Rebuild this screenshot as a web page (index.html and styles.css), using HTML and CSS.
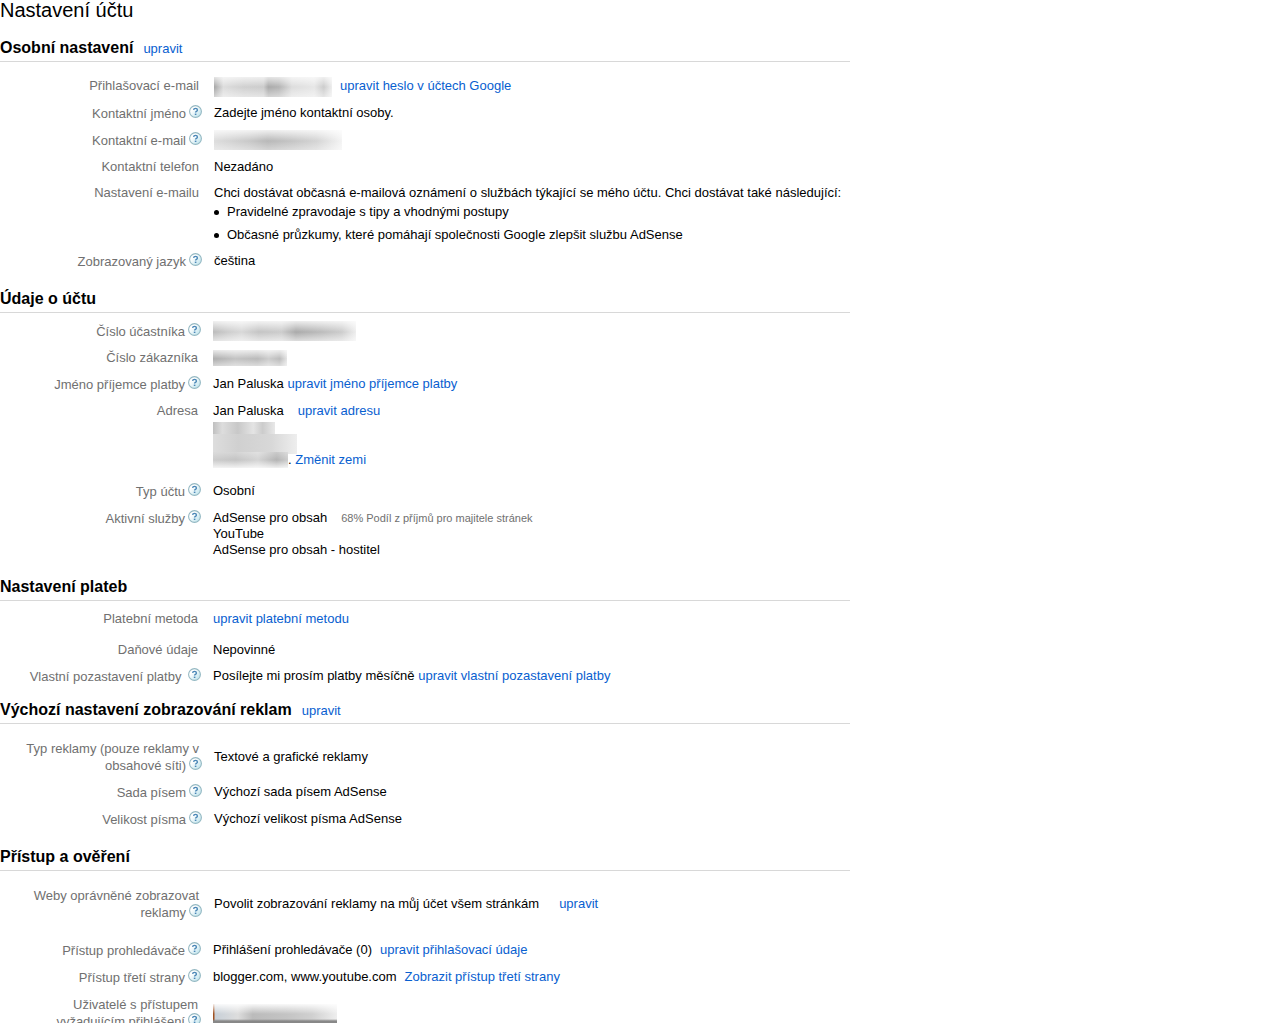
FILE: index.html
```html
<!DOCTYPE html>
<html lang="cs">
<head>
  <meta charset="UTF-8">
  <title>Nastavení účtu</title>
  <link rel="stylesheet" href="styles.css">
</head>
<body>
  <svg class="defs" aria-hidden="true">
    <defs>
      <linearGradient id="helpFill" x1="0" y1="0" x2="1" y2="1">
        <stop offset="0.3" stop-color="#ffffff"/>
        <stop offset="1" stop-color="#b4dfea"/>
      </linearGradient>
      <symbol id="help" viewBox="0 0 13 13">
        <circle cx="6.5" cy="6.5" r="5.9" fill="url(#helpFill)" stroke="#94b8c2" stroke-width="1.1"/>
        <path d="M4.6 4.9 Q4.7 3.4 6.5 3.4 Q8.4 3.4 8.4 4.9 Q8.4 5.8 7.4 6.3 Q6.6 6.7 6.6 7.6" fill="none" stroke="#4a86b6" stroke-width="1.4"/>
        <rect x="5.8" y="8.6" width="1.6" height="1.4" fill="#4a86b6"/>
      </symbol>
    </defs>
  </svg>

  <main class="settings">
    <h1>Nastavení účtu</h1>

    <section>
      <div class="heading"><h2>Osobní nastavení</h2><a href="#">upravit</a></div>
      <dl>
        <div class="row">
          <dt>Přihlašovací e-mail</dt>
          <dd><span class="hidden email"></span><a href="#" class="near">upravit heslo v účtech Google</a></dd>
        </div>
        <div class="row">
          <dt class="has-help">Kontaktní jméno<button class="help" aria-label="Nápověda"><svg><use href="#help"/></svg></button></dt>
          <dd>Zadejte jméno kontaktní osoby.</dd>
        </div>
        <div class="row">
          <dt class="has-help">Kontaktní e-mail<button class="help" aria-label="Nápověda"><svg><use href="#help"/></svg></button></dt>
          <dd><span class="hidden contact"></span></dd>
        </div>
        <div class="row">
          <dt>Kontaktní telefon</dt>
          <dd>Nezadáno</dd>
        </div>
        <div class="row">
          <dt>Nastavení e-mailu</dt>
          <dd>
            Chci dostávat občasná e-mailová oznámení o službách týkající se mého účtu. Chci dostávat také následující:
            <ul>
              <li>Pravidelné zpravodaje s tipy a vhodnými postupy</li>
              <li>Občasné průzkumy, které pomáhají společnosti Google zlepšit službu AdSense</li>
            </ul>
          </dd>
        </div>
        <div class="row">
          <dt class="has-help">Zobrazovaný jazyk<button class="help" aria-label="Nápověda"><svg><use href="#help"/></svg></button></dt>
          <dd>čeština</dd>
        </div>
      </dl>
    </section>

    <section>
      <div class="heading"><h2>Údaje o účtu</h2></div>
      <dl class="compact">
        <div class="row">
          <dt class="has-help">Číslo účastníka<button class="help" aria-label="Nápověda"><svg><use href="#help"/></svg></button></dt>
          <dd><span class="hidden publisher"></span></dd>
        </div>
        <div class="row">
          <dt>Číslo zákazníka</dt>
          <dd><span class="hidden customer"></span></dd>
        </div>
        <div class="row">
          <dt class="has-help">Jméno příjemce platby<button class="help" aria-label="Nápověda"><svg><use href="#help"/></svg></button></dt>
          <dd>Jan Paluska <a href="#">upravit jméno příjemce platby</a></dd>
        </div>
        <div class="row spaced">
          <dt>Adresa</dt>
          <dd>
            <div>Jan Paluska<a href="#" class="far">upravit adresu</a></div>
            <div><span class="hidden street"></span></div>
            <div><span class="hidden city"></span></div>
            <div><span class="hidden country"></span>. <a href="#">Změnit zemi</a></div>
          </dd>
        </div>
        <div class="row">
          <dt class="has-help">Typ účtu<button class="help" aria-label="Nápověda"><svg><use href="#help"/></svg></button></dt>
          <dd>Osobní</dd>
        </div>
        <div class="row">
          <dt class="has-help">Aktivní služby<button class="help" aria-label="Nápověda"><svg><use href="#help"/></svg></button></dt>
          <dd>
            <div>AdSense pro obsah<span class="share">68% Podíl z příjmů pro majitele stránek</span></div>
            <div>YouTube</div>
            <div>AdSense pro obsah - hostitel</div>
          </dd>
        </div>
      </dl>
    </section>

    <section class="tight">
      <div class="heading"><h2>Nastavení plateb</h2></div>
      <dl class="compact">
        <div class="row spaced">
          <dt>Platební metoda</dt>
          <dd><a href="#">upravit platební metodu</a></dd>
        </div>
        <div class="row">
          <dt>Daňové údaje</dt>
          <dd>Nepovinné</dd>
        </div>
        <div class="row">
          <dt class="has-help">Vlastní pozastavení platby <button class="help" aria-label="Nápověda"><svg><use href="#help"/></svg></button></dt>
          <dd>Posílejte mi prosím platby měsíčně <a href="#">upravit vlastní pozastavení platby</a></dd>
        </div>
      </dl>
    </section>

    <section>
      <div class="heading"><h2>Výchozí nastavení zobrazování reklam</h2><a href="#">upravit</a></div>
      <dl>
        <div class="row middle">
          <dt class="has-help">Typ reklamy (pouze reklamy v obsahové síti)<button class="help" aria-label="Nápověda"><svg><use href="#help"/></svg></button></dt>
          <dd>Textové a grafické reklamy</dd>
        </div>
        <div class="row">
          <dt class="has-help">Sada písem<button class="help" aria-label="Nápověda"><svg><use href="#help"/></svg></button></dt>
          <dd>Výchozí sada písem AdSense</dd>
        </div>
        <div class="row">
          <dt class="has-help">Velikost písma<button class="help" aria-label="Nápověda"><svg><use href="#help"/></svg></button></dt>
          <dd>Výchozí velikost písma AdSense</dd>
        </div>
      </dl>
    </section>

    <section>
      <div class="heading"><h2>Přístup a ověření</h2></div>
      <dl>
        <div class="row middle apart">
          <dt class="has-help">Weby oprávněné zobrazovat reklamy<button class="help" aria-label="Nápověda"><svg><use href="#help"/></svg></button></dt>
          <dd>Povolit zobrazování reklamy na můj účet všem stránkám<a href="#" class="farther">upravit</a></dd>
        </div>
      </dl>
      <dl class="compact joined">
        <div class="row">
          <dt class="has-help">Přístup prohledávače<button class="help" aria-label="Nápověda"><svg><use href="#help"/></svg></button></dt>
          <dd>Přihlášení prohledávače (0)<a href="#" class="near">upravit přihlašovací údaje</a></dd>
        </div>
        <div class="row">
          <dt class="has-help">Přístup třetí strany<button class="help" aria-label="Nápověda"><svg><use href="#help"/></svg></button></dt>
          <dd>blogger.com, www.youtube.com<a href="#" class="near">Zobrazit přístup třetí strany</a></dd>
        </div>
        <div class="row middle">
          <dt class="has-help">Uživatelé s přístupem vyžadujícím přihlášení<button class="help" aria-label="Nápověda"><svg><use href="#help"/></svg></button></dt>
          <dd><span class="hidden user"></span></dd>
        </div>
      </dl>
    </section>
  </main>
</body>
</html>
```

FILE: styles.css
```css
body {
  margin: 0;
  background: #fff;
  color: #000;
  font-family: Arial, "Liberation Sans", sans-serif;
  font-size: 13px;
  line-height: 16px;
}
a {
  color: #0860d0;
  text-decoration: none;
}
a:hover {
  text-decoration: underline;
}
.defs {
  position: absolute;
  width: 0;
  height: 0;
}
.settings {
  max-width: 850px;
}
h1 {
  margin: 0 0 18px;
  font-size: 20px;
  font-weight: normal;
  line-height: 20px;
}
section {
  padding-bottom: 14px;
}
section.tight {
  padding-bottom: 10px;
}
.heading {
  display: flex;
  align-items: baseline;
  gap: 10px;
  padding-bottom: 3px;
  border-bottom: 1px solid #d8d8d8;
}
h2 {
  margin: 0;
  font-size: 16px;
  line-height: 20px;
}
dl {
  margin: 0;
  padding-top: 11px;
}
dl.compact {
  padding-top: 5px;
}
dl.joined {
  padding-top: 0;
}
.row {
  display: grid;
  grid-template-columns: 199px 1fr;
  column-gap: 15px;
  padding: 5px 0;
}
.compact .row {
  grid-template-columns: 198px 1fr;
}
.row.middle {
  align-items: center;
}
.row.spaced {
  padding-bottom: 10px;
}
.row.apart {
  padding-bottom: 16px;
}
dt {
  padding-left: 20px;
  color: #707070;
  text-align: right;
}
dt.has-help {
  line-height: 17px;
}
dd {
  margin: 0;
}
ul {
  margin: 3px 0 0;
  padding-left: 13px;
  list-style: none;
}
li {
  margin-bottom: 7px;
}
li:last-child {
  margin-bottom: 0;
}
li::before {
  content: "";
  float: left;
  width: 5px;
  height: 5px;
  margin: 6px 0 0 -13px;
  border-radius: 50%;
  background: #000;
}
.help {
  width: 13px;
  height: 13px;
  margin: 0 -3px 0 3px;
  padding: 0;
  border: none;
  background: none;
  vertical-align: baseline;
  cursor: pointer;
}
.help svg {
  display: block;
  width: 13px;
  height: 13px;
}
.near {
  margin-left: 8px;
}
.far {
  margin-left: 14px;
}
.farther {
  margin-left: 20px;
}
.share {
  margin-left: 14px;
  color: #707070;
  font-size: 11px;
}

/* hidden personal data */
.hidden {
  display: inline-block;
  height: 20px;
  margin: -2px 0;
  vertical-align: middle;
}
.email {
  width: 118px;
  background: linear-gradient(to bottom, rgba(255,255,255,0.7), rgba(255,255,255,0) 50%, rgba(255,255,255,0.5)),
    linear-gradient(to right, #a5a5a5, #ddd 8%, #d0d0d0 25%, #ccc 42%, #aaa 46%, #b4b4b4 55%, #ddd 66%, #e6e6e6 85%, #ccc 93%, #eee);
}
.contact {
  width: 128px;
  background: linear-gradient(to bottom, rgba(255,255,255,0.8), rgba(255,255,255,0) 55%, rgba(255,255,255,0.4)),
    linear-gradient(to right, #ddd, #c8c8c8 28%, #b8b8b8 42%, #c4c4c4 60%, #d4d4d4 80%, #f4f4f4);
}
.publisher {
  width: 143px;
  background: linear-gradient(to bottom, rgba(255,255,255,0.8), rgba(255,255,255,0) 55%, rgba(255,255,255,0.6)),
    linear-gradient(to right, #bbb, #ccc 10%, #d8d8d8 20%, #c4c4c4 32%, #ccc 48%, #aaa 58%, #bbb 75%, #ccc 90%, #eee);
}
.customer {
  width: 74px;
  height: 16px;
  margin: 0;
  background: linear-gradient(to bottom, rgba(255,255,255,0.8), rgba(255,255,255,0.2) 55%, rgba(255,255,255,0.6)),
    linear-gradient(to right, #999, #b4b4b4 30%, #a8a8a8 60%, #c0c0c0 75%, #aaa 90%, #ddd);
}
.street {
  width: 62px;
  height: 12px;
  background: linear-gradient(to right, #c0c0c0, #ddd 15%, #c8c8c8 40%, #e4e4e4 65%, #ccc 80%, #e8e8e8);
}
.city {
  width: 84px;
  background: linear-gradient(to right, #ddd, #d0d0d0 30%, #d8d8d8 70%, #eee);
}
.country {
  width: 75px;
  height: 16px;
  margin: 0;
  background: linear-gradient(to bottom, rgba(255,255,255,0.3), rgba(255,255,255,0) 50%, rgba(255,255,255,0.8)),
    linear-gradient(to right, #ccc, #c4c4c4 30%, #d4d4d4 60%, #b4b4b4 85%, #ccc);
}
.user {
  width: 124px;
  background: linear-gradient(to bottom, rgba(255,255,255,0.9), rgba(255,255,255,0) 50%, rgba(255,255,255,0) 75%, #888 85%),
    linear-gradient(to right, #a05020 1px, #c8d0d8 2px, #ddd 20%, #bbb 32%, #c4c4c4 60%, #d0d0d0 80%, #eee);
}
```
